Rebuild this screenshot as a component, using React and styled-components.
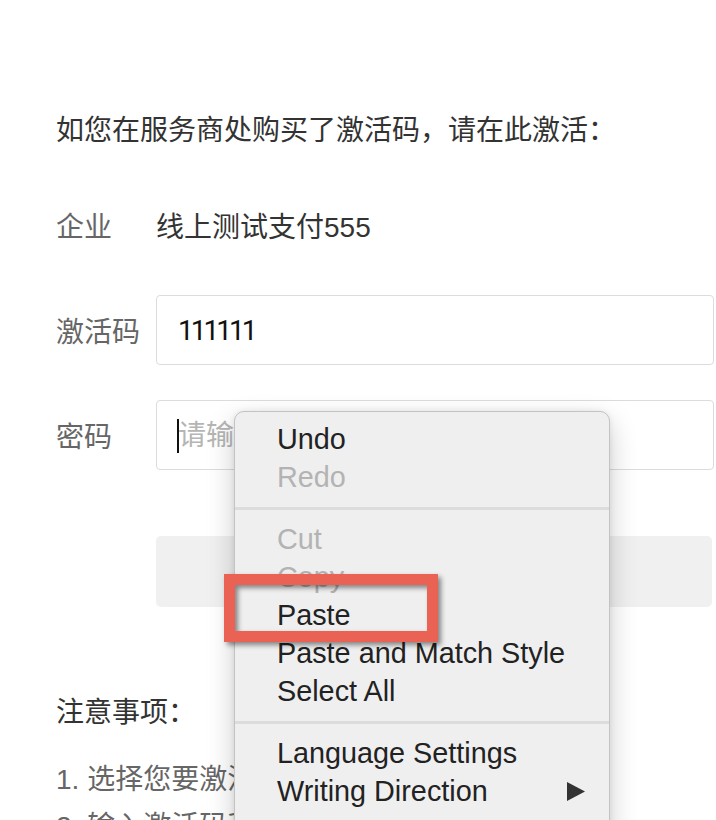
import React from "react";
import styled, { createGlobalStyle } from "styled-components";

const GlobalStyle = createGlobalStyle`
  html, body {
    margin: 0;
    padding: 0;
    overflow: hidden;
    background: #fff;
  }
  body {
    font-family: "Liberation Sans", "Noto Sans CJK SC", sans-serif;
  }
`;

const Page = styled.div`
  position: relative;
  width: 716px;
  height: 820px;
  overflow: hidden;
  box-sizing: border-box;
  padding: 111px 0 0 56px;
  color: #333;
  font-size: 28px;
`;

const Heading = styled.p`
  margin: 0;
  line-height: 40px;
  color: #333;
`;

const Form = styled.div`
  display: grid;
  grid-template-columns: 100px 558px;
  grid-auto-rows: 70px;
  row-gap: 35px;
  margin-top: 39px;
`;

const Label = styled.div`
  display: flex;
  align-items: center;
  color: #666;
`;

const Value = styled.div`
  display: flex;
  align-items: center;
  color: #333;
`;

const Field = styled.div`
  position: relative;
`;

const Input = styled.input`
  box-sizing: border-box;
  width: 100%;
  height: 70px;
  border: 1.5px solid #dcdcdc;
  border-radius: 4px;
  padding: 0 0 0 21px;
  font-family: Roboto, "Noto Sans CJK SC", sans-serif;
  font-size: 28px;
  color: #111;
  letter-spacing: ${(p) => (p.$tight ? "-3px" : "0")};
  outline: none;
  background: #fff;
  &::placeholder {
    color: #b5b5b5;
    letter-spacing: 0;
  }
`;

const Caret = styled.span`
  position: absolute;
  left: 21px;
  top: 19px;
  width: 2px;
  height: 34px;
  background: #111;
`;

const Submit = styled.button`
  display: block;
  box-sizing: border-box;
  margin: 66px 0 0 100px;
  width: 556px;
  height: 71px;
  border: none;
  border-radius: 5px;
  background: #f0f0f0;
  color: #999;
  font-family: "Liberation Sans", "Noto Sans CJK SC", sans-serif;
  font-size: 28px;
`;

const NoteTitle = styled.p`
  margin: 86px 0 0;
  line-height: 40px;
  color: #333;
`;

const NoteList = styled.ol`
  margin: 23px 0 0;
  padding: 0;
  list-style: none;
  color: #666;
  line-height: 47px;
`;

const Menu = styled.div`
  position: absolute;
  left: 234px;
  top: 411px;
  width: 376px;
  box-sizing: border-box;
  padding: 8px 0 40px;
  background: #efefef;
  border: 1px solid #c3c3c3;
  border-radius: 10px;
  box-shadow: 0 10px 28px rgba(0, 0, 0, 0.2), 0 0 6px rgba(0, 0, 0, 0.08);
  font-family: "Liberation Sans", sans-serif;
  font-size: 28.8px;
`;

const Item = styled.div`
  display: flex;
  align-items: center;
  justify-content: space-between;
  height: 38px;
  line-height: 38px;
  padding: 0 24px 0 42px;
  color: ${(p) => (p.$disabled ? "#b3b3b3" : "#222")};
  white-space: nowrap;
`;

const Separator = styled.div`
  height: 3px;
  margin: 11px 0 10px;
  background: #dcdcdc;
`;

const Highlight = styled.div`
  position: absolute;
  left: 224px;
  top: 574px;
  width: 214px;
  height: 68px;
  box-sizing: border-box;
  border: 11px solid #ea6253;
  box-shadow: 3px 3px 5px rgba(0, 0, 0, 0.45),
    inset 3px 3px 5px rgba(0, 0, 0, 0.45);
`;

const Arrow = () => (
  <svg width="18" height="19" viewBox="0 0 18 19">
    <path d="M0 0 L18 9.5 L0 19 Z" fill="#333" />
  </svg>
);

const menuGroups = [
  [
    { label: "Undo" },
    { label: "Redo", disabled: true },
  ],
  [
    { label: "Cut", disabled: true },
    { label: "Copy", disabled: true },
    { label: "Paste" },
    { label: "Paste and Match Style" },
    { label: "Select All" },
  ],
  [
    { label: "Language Settings" },
    { label: "Writing Direction", submenu: true },
  ],
];

const App = () => {
  return (
    <>
      <GlobalStyle />
      <Page>
        <Heading>如您在服务商处购买了激活码，请在此激活：</Heading>
        <Form>
          <Label>企业</Label>
          <Value>线上测试支付555</Value>
          <Label>激活码</Label>
          <Field>
            <Input type="text" defaultValue="111111" spellCheck={false} $tight />
          </Field>
          <Label>密码</Label>
          <Field>
            <Input type="password" placeholder="请输入密码" />
            <Caret />
          </Field>
        </Form>
        <Submit>立即激活</Submit>
        <NoteTitle>注意事项：</NoteTitle>
        <NoteList>
          <li>1. 选择您要激活的企业</li>
          <li>2. 输入激活码和密码</li>
        </NoteList>

        <Menu>
          {menuGroups.map((group, gi) => (
            <React.Fragment key={gi}>
              {gi > 0 && <Separator />}
              {group.map((item) => (
                <Item key={item.label} $disabled={item.disabled}>
                  <span>{item.label}</span>
                  {item.submenu && <Arrow />}
                </Item>
              ))}
            </React.Fragment>
          ))}
        </Menu>
        <Highlight />
      </Page>
    </>
  );
};

export default App;
